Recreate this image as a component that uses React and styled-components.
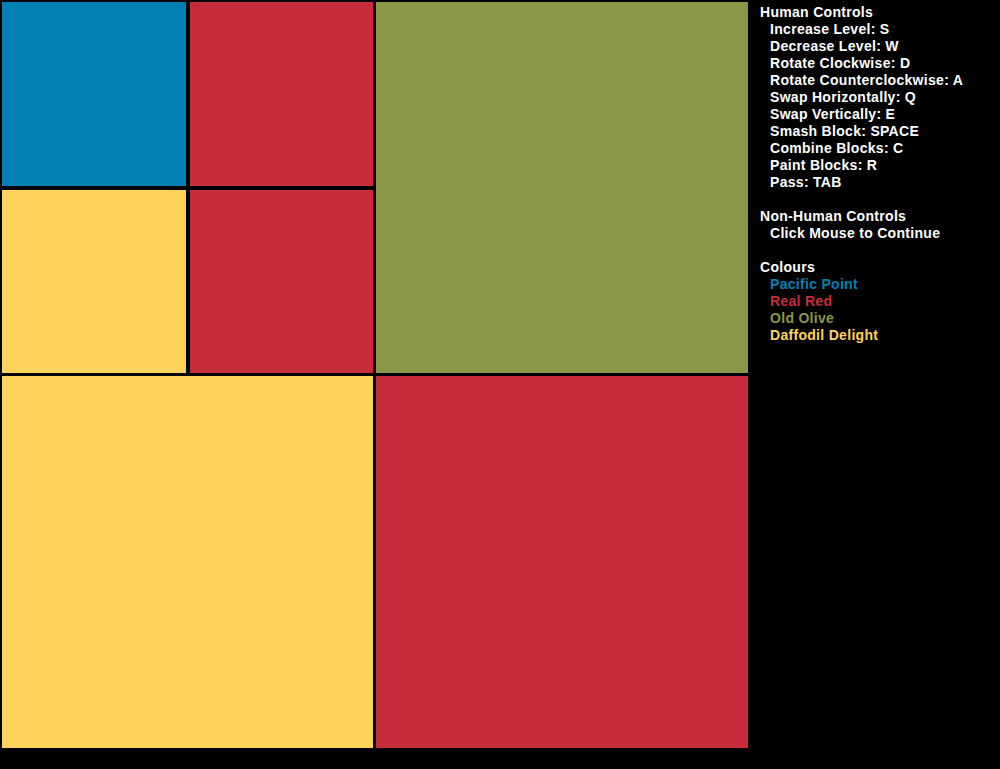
import React from "react";
import styled, { createGlobalStyle } from "styled-components";

const PACIFIC_POINT = "rgb(1, 128, 181)";
const REAL_RED = "rgb(199, 44, 58)";
const OLD_OLIVE = "rgb(138, 151, 71)";
const DAFFODIL_DELIGHT = "rgb(255, 211, 92)";

const GlobalStyle = createGlobalStyle`
  html, body {
    margin: 0;
    padding: 0;
    background: #000;
  }
  body {
    font-family: "Liberation Sans", Arial, sans-serif;
  }
`;

const Screen = styled.div`
  width: 1000px;
  height: 769px;
  background: #000;
  display: flex;
  align-items: flex-start;
  overflow: hidden;
`;

const Board = styled.div`
  width: 750px;
  height: 750px;
  box-sizing: border-box;
  padding: 2px;
  display: grid;
  grid-template-columns: 371px 372px;
  grid-template-rows: 371px 372px;
  gap: 3px;
`;

const Quadrant = styled.div`
  display: grid;
  grid-template-columns: 184px 183px;
  grid-template-rows: 184px 183px;
  gap: 4px;
`;

const Block = styled.div`
  background: ${(p) => p.$colour};
`;

const Panel = styled.div`
  padding: 4px 0 0 10px;
  color: #fff;
  font-weight: bold;
  font-size: 14px;
  letter-spacing: 0.3px;
  line-height: 17px;
  white-space: nowrap;
`;

const Section = styled.div`
  margin-bottom: 17px;
`;

const Heading = styled.div``;

const Item = styled.div`
  padding-left: 10px;
  color: ${(p) => p.$colour || "#fff"};
`;

const humanControls = [
  "Increase Level: S",
  "Decrease Level: W",
  "Rotate Clockwise: D",
  "Rotate Counterclockwise: A",
  "Swap Horizontally: Q",
  "Swap Vertically: E",
  "Smash Block: SPACE",
  "Combine Blocks: C",
  "Paint Blocks: R",
  "Pass: TAB",
];

const colours = [
  ["Pacific Point", PACIFIC_POINT],
  ["Real Red", REAL_RED],
  ["Old Olive", OLD_OLIVE],
  ["Daffodil Delight", DAFFODIL_DELIGHT],
];

export default function App() {
  return (
    <>
      <GlobalStyle />
      <Screen>
        <Board>
          <Quadrant>
            <Block $colour={PACIFIC_POINT} />
            <Block $colour={REAL_RED} />
            <Block $colour={DAFFODIL_DELIGHT} />
            <Block $colour={REAL_RED} />
          </Quadrant>
          <Block $colour={OLD_OLIVE} />
          <Block $colour={DAFFODIL_DELIGHT} />
          <Block $colour={REAL_RED} />
        </Board>
        <Panel>
          <Section>
            <Heading>Human Controls</Heading>
            {humanControls.map((c) => (
              <Item key={c}>{c}</Item>
            ))}
          </Section>
          <Section>
            <Heading>Non-Human Controls</Heading>
            <Item>Click Mouse to Continue</Item>
          </Section>
          <Section>
            <Heading>Colours</Heading>
            {colours.map(([name, c]) => (
              <Item key={name} $colour={c}>
                {name}
              </Item>
            ))}
          </Section>
        </Panel>
      </Screen>
    </>
  );
}
